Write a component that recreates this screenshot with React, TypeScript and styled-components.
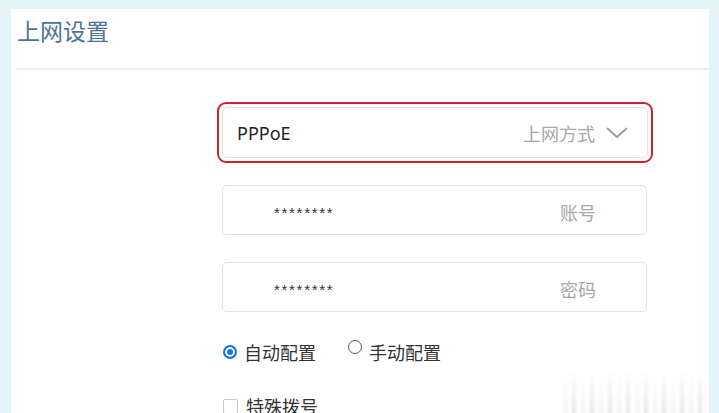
import React from "react";
import styled, { createGlobalStyle } from "styled-components";

const Global = createGlobalStyle`
  html, body { margin: 0; padding: 0; }
  body {
    background: #e5f3fb;
    font-family: "Noto Sans", "Noto Sans CJK SC", sans-serif;
    overflow: hidden;
  }
`;

const Page = styled.div`
  width: 719px;
  height: 413px;
  box-sizing: border-box;
  padding: 9px 10px 0 11px;
  position: relative;
  overflow: hidden;
`;

const Panel = styled.div`
  background: #fff;
  height: 100%;
  display: flex;
  flex-direction: column;
  overflow: hidden;
`;

const Header = styled.div`
  flex: none;
  height: 59px;
  margin-left: 5px;
  border-bottom: 2px solid #eceeef;
  display: flex;
  align-items: flex-start;
`;

const Title = styled.h1`
  margin: 6px 0 0 1px;
  font-family: "Noto Sans CJK SC", sans-serif;
  font-weight: 400;
  font-size: 23px;
  line-height: 30px;
  color: #4d7399;
`;

const Form = styled.div`
  flex: none;
  margin: 32px 0 0 206px;
  width: 436px;
  display: flex;
  flex-direction: column;
`;

const Highlight = styled.div`
  border: 2px solid #d0222c;
  border-radius: 9px;
  padding: 3px;
`;

const Field = styled.div<{ $h?: number }>`
  height: ${(p) => p.$h ?? 50}px;
  box-sizing: border-box;
  border: 1px solid #e2e2e2;
  border-radius: 5px;
  display: flex;
  align-items: center;
  background: #fff;
`;

const SelectField = styled(Field)`
  padding: 0 19px 0 14px;
  justify-content: space-between;
`;

const Value = styled.span`
  font-size: 18px;
  color: #222;
  font-family: "Noto Sans", "Noto Sans CJK SC", sans-serif;
`;

const Hint = styled.span`
  font-family: "Noto Sans CJK SC", sans-serif;
  font-size: 18px;
  color: #a8a8a8;
`;

const Right = styled.div`
  display: flex;
  align-items: center;
  gap: 11px;
`;

const InputField = styled(Field)`
  margin: 22px 0 0 5px;
  width: 425px;
  padding: 0 50px 0 51px;
  justify-content: space-between;
  & + & {
    margin-top: 27px;
  }
`;

const Stars = styled.span`
  font-family: "Liberation Sans", sans-serif;
  font-size: 15px;
  color: #333;
  letter-spacing: 1.7px;
  margin-top: 4px;
`;

const InputHint = styled(Hint)`
  margin-top: 4px;
`;

const RadioRow = styled.div`
  margin: 27px 0 0 6px;
  display: flex;
  align-items: center;
  gap: 32px;
`;

const Option = styled.label<{ $lift?: number }>`
  display: flex;
  align-items: center;
  gap: 7px;
  font-family: "Noto Sans CJK SC", sans-serif;
  font-size: 18px;
  color: #333;
  span:first-child {
    transform: translateY(${(p) => -(p.$lift ?? 0)}px);
  }
`;

const Radio = styled.span<{ $on?: boolean }>`
  width: 14px;
  height: 14px;
  box-sizing: border-box;
  border-radius: 50%;
  border: ${(p) => (p.$on ? "2px solid #1a73e8" : "1px solid #555")};
  background: ${(p) => (p.$on ? "#1a73e8" : "#fff")};
  box-shadow: ${(p) => (p.$on ? "inset 0 0 0 2px #fff" : "none")};
  flex: none;
`;

const CheckRow = styled.div`
  margin: 28px 0 0 6px;
  display: flex;
  align-items: center;
  gap: 8px;
  font-family: "Noto Sans CJK SC", sans-serif;
  font-size: 18px;
  color: #333;
`;

const Box = styled.span`
  width: 13px;
  height: 13px;
  border: 1px solid #c8c8c8;
  border-radius: 2px;
  flex: none;
`;

const Watermark = styled.div`
  position: absolute;
  left: 560px;
  top: 373px;
  width: 146px;
  height: 40px;
  opacity: 0.5;
  background:
    linear-gradient(to bottom, rgba(255,255,255,0.95), rgba(255,255,255,0)),
    repeating-linear-gradient(
      to right,
      rgba(255,255,255,0) 0px,
      rgba(180,180,180,0.25) 6px,
      rgba(255,255,255,0) 10px,
      rgba(150,150,150,0.45) 14px,
      rgba(255,255,255,0) 18px
    );
`;

const Chevron = () => (
  <svg width="22" height="12" viewBox="0 0 22 12" fill="none">
    <path d="M1.5 1.5 L11 10 L20.5 1.5" stroke="#9a9a9a" strokeWidth="1.8" strokeLinecap="round" strokeLinejoin="round" />
  </svg>
);

export default function App() {
  return (
    <>
      <Global />
      <Page>
        <Panel>
          <Header>
            <Title>上网设置</Title>
          </Header>
          <Form>
            <Highlight>
              <SelectField $h={51}>
                <Value>PPPoE</Value>
                <Right>
                  <Hint>上网方式</Hint>
                  <Chevron />
                </Right>
              </SelectField>
            </Highlight>
            <InputField>
              <Stars>********</Stars>
              <InputHint>账号</InputHint>
            </InputField>
            <InputField>
              <Stars>********</Stars>
              <InputHint>密码</InputHint>
            </InputField>
            <RadioRow>
              <Option>
                <Radio $on />
                <span>自动配置</span>
              </Option>
              <Option $lift={5}>
                <Radio />
                <span>手动配置</span>
              </Option>
            </RadioRow>
            <CheckRow>
              <Box />
              <span>特殊拨号</span>
            </CheckRow>
          </Form>
        </Panel>
        <Watermark />
      </Page>
    </>
  );
}
